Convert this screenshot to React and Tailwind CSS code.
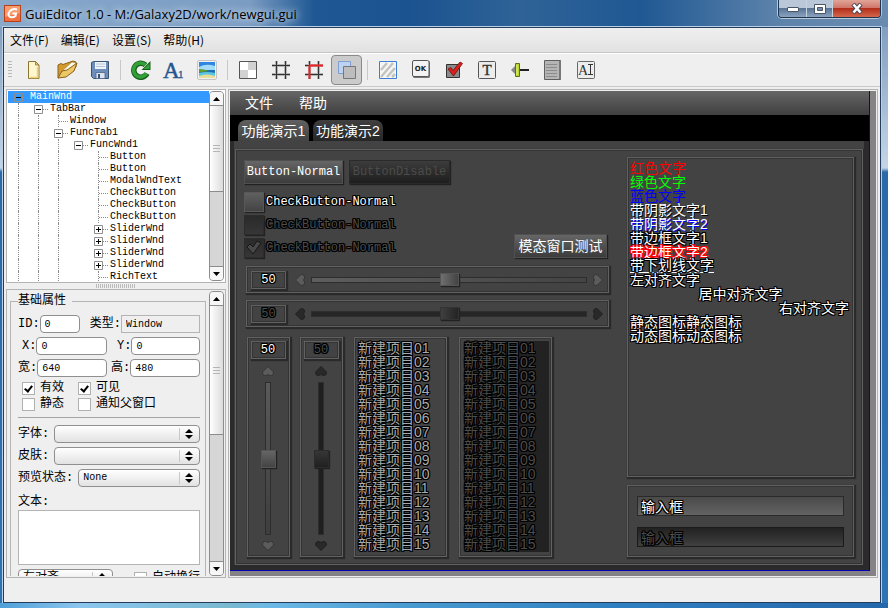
import { useState } from 'react'

const TREE = [
  { name: 'MainWnd', depth: 0, sign: '-' },
  { name: 'TabBar', depth: 1, sign: '-' },
  { name: 'Window', depth: 2 },
  { name: 'FuncTab1', depth: 2, sign: '-' },
  { name: 'FuncWnd1', depth: 3, sign: '-' },
  { name: 'Button', depth: 4 },
  { name: 'Button', depth: 4 },
  { name: 'ModalWndText', depth: 4 },
  { name: 'CheckButton', depth: 4 },
  { name: 'CheckButton', depth: 4 },
  { name: 'CheckButton', depth: 4 },
  { name: 'SliderWnd', depth: 4, sign: '+' },
  { name: 'SliderWnd', depth: 4, sign: '+' },
  { name: 'SliderWnd', depth: 4, sign: '+' },
  { name: 'SliderWnd', depth: 4, sign: '+' },
  { name: 'RichText', depth: 4 },
]

const ITEMS = ['01', '02', '03', '04', '05', '06', '07', '08', '09', '10', '11', '12', '13', '14', '15']

const OUTLINE = '[text-shadow:1px_0_#000,-1px_0_#000,0_1px_#000,0_-1px_#000,1px_1px_#000,-1px_-1px_#000,1px_-1px_#000,-1px_1px_#000]'
const OUTLINE_RED = '[text-shadow:1px_0_#f00,-1px_0_#f00,0_1px_#f00,0_-1px_#f00,1px_1px_#f00,-1px_-1px_#f00,1px_-1px_#f00,-1px_1px_#f00]'
const FRAME = 'border border-[#616161] shadow-[inset_0_0_0_1px_#343434,1px_1px_1px_1px_#2a2a2a]'
const MONO = "font-['Liberation_Mono','Noto_Sans_CJK_SC',monospace]"

/* ---------- toolbar icons ---------- */

const icons = {
  new: (
    <svg width="20" height="20" viewBox="0 0 20 20">
      <path d="M4.500 1.500h7l3.500 3.500v13.500H4.500z" fill="#fdf6cf" stroke="#8d7433" />
      <path d="M11.500 1.500l3.500 3.500h-3.500z" fill="#e9c765" stroke="#8d7433" strokeWidth=".8" />
      <path d="M13.500 7v10.500H6" fill="none" stroke="#ecd27a" strokeWidth="1.500" />
    </svg>
  ),
  open: (
    <svg width="22" height="20" viewBox="0 0 22 20">
      <path d="M2 18V5l3-1.500 2 1L17 1l3 1v5z" fill="#d49b2c" stroke="#8a611a" />
      <path d="M5 12L16 2l4 1-3 8z" fill="#fffbe9" stroke="#a58b4c" strokeWidth=".7" />
      <path d="M2 18l4-7 5-1 10-7-3 8-8 6z" fill="#ecc766" stroke="#8a611a" />
    </svg>
  ),
  save: (
    <svg width="20" height="20" viewBox="0 0 20 20">
      <path d="M1.500 2.500l2-1h15v17H3.500l-2-2z" fill="#6c8eb8" stroke="#3c5470" />
      <path d="M5 2h11v7H5z" fill="#eef3f9" />
      <path d="M6 4h9M6 6.500h9" stroke="#b5c5d8" />
      <path d="M6 12.500h9v6H6z" fill="#dbe4ee" stroke="#49658a" strokeWidth=".8" />
      <path d="M8 14h2v4H8z" fill="#3c5470" />
    </svg>
  ),
  refresh: (
    <svg width="20" height="20" viewBox="0 0 20 20">
      <path d="M16 13.500A7 7 0 1 1 14.500 5" fill="none" stroke="#14611a" strokeWidth="5.500" />
      <path d="M19.500 1v9h-9z" fill="#14611a" />
      <path d="M15.500 13.500A7 7 0 1 1 14.500 5" fill="none" stroke="#35a03a" strokeWidth="3.500" />
      <path d="M18.500 3.500v5.500h-6z" fill="#35a03a" />
    </svg>
  ),
  font: (
    <svg width="22" height="20" viewBox="0 0 22 20" className="overflow-visible">
      <text x="0" y="18" fontSize="23" fontFamily="Liberation Serif, serif" fill="#23568f" stroke="#23568f" strokeWidth=".5">A</text>
      <text x="15" y="18" fontSize="11" fontFamily="Liberation Serif, serif" fill="#23568f" stroke="#23568f" strokeWidth=".3">1</text>
    </svg>
  ),
  image: (
    <svg width="20" height="20" viewBox="0 0 20 20">
      <rect x=".5" y=".5" width="19" height="19" rx="1.500" fill="#f1f1f1" stroke="#c4c4c4" />
      <path d="M2 2h16v9H2z" fill="#2f86e0" />
      <path d="M2 7q7-4 16-1v5H2z" fill="#a5dbfa" />
      <path d="M2 10h16v3H2z" fill="#1d6fb8" />
      <path d="M2 9q5 0 10 2l-10 1.500z" fill="#5f9b2d" />
      <path d="M2 13q8-2 16 0v5H2z" fill="#5fc6e0" />
      <path d="M2 16q8-3 16 0v2H2z" fill="#e8dd9a" />
    </svg>
  ),
  checker: (
    <svg width="18" height="18" viewBox="0 0 18 18">
      <path d="M.5.5h17v17H.5z" fill="#fff" stroke="#555" />
      <path d="M9 1h8v8H9zM1 9h8v8H1z" fill="#d2d2d2" />
    </svg>
  ),
  grid: (
    <svg width="20" height="20" viewBox="0 0 20 20">
      <path d="M5.500 1v18M14.500 1v18M1 5.500h18M1 14.500h18" stroke="#b5b5b5" strokeWidth="3" />
      <path d="M5.500 1v18M14.500 1v18M1 5.500h18M1 14.500h18" stroke="#333" />
    </svg>
  ),
  gridRed: (
    <svg width="20" height="20" viewBox="0 0 20 20">
      <path d="M5.500 1v18M14.500 1v18M1 5.500h18M1 14.500h18" stroke="#b5b5b5" strokeWidth="3" />
      <path d="M14.500 1v18M1 14.500h18" stroke="#333" />
      <path d="M5.500 1v4M1 5.500h4" stroke="#333" />
      <path d="M5.500 5v14M5 5.500h14" stroke="#f02020" strokeWidth="2" />
    </svg>
  ),
  layers: (
    <svg width="20" height="20" viewBox="0 0 20 20">
      <path d="M1.500 1.500h12v12h-12z" fill="#bcd2f0" stroke="#7f9fd0" />
      <path d="M6.500 6.500h12v12h-12z" fill="#bdbdbd" stroke="#777" />
    </svg>
  ),
  stripes: (
    <svg width="18" height="18" viewBox="0 0 18 18">
      <path d="M.5.5h17v17H.5z" fill="#f6f6f6" stroke="#3e7fd6" />
      <path d="M2 9l6-7M2 16L14 2M8 16l8-9M13 16l3-3" stroke="#c3c3bf" strokeWidth="2.500" />
    </svg>
  ),
  ok: (
    <svg width="20" height="20" viewBox="0 0 20 20">
      <rect x="2" y="1" width="17" height="17" rx="1.500" fill="#777" />
      <rect x="1.500" y=".5" width="16.500" height="16" rx="1.500" fill="#f3f3f3" stroke="#555" />
      <text x="9.500" y="11" fontSize="7" fontWeight="bold" fontFamily="DejaVu Sans, sans-serif" textAnchor="middle" fill="#222">OK</text>
    </svg>
  ),
  check: (
    <svg width="20" height="20" viewBox="0 0 20 20">
      <path d="M2.500 4.500h13v13h-13z" fill="#8b8b8b" stroke="#333" />
      <path d="M4 9l3-1.500 2 3L16 2l2.500 1.500L9.500 16z" fill="#dc2020" stroke="#6d0d0d" strokeWidth=".8" />
    </svg>
  ),
  text: (
    <svg width="20" height="20" viewBox="0 0 20 20">
      <rect x="1.500" y="1.500" width="17" height="17" rx="1" fill="#ececec" stroke="#555" />
      <text x="10" y="15" fontSize="15" fontFamily="Liberation Serif, serif" textAnchor="middle" fill="#333" stroke="#333" strokeWidth=".4">T</text>
    </svg>
  ),
  slider: (
    <svg width="20" height="20" viewBox="0 0 20 20">
      <path d="M2 10h17" stroke="#222" strokeWidth="2" />
      <path d="M5 6v8l-4-4z" fill="#888" />
      <path d="M5.500 3.500h4v13h-4z" fill="#b6d62c" stroke="#55701a" />
      <path d="M7 5v10" stroke="#e4f38a" />
    </svg>
  ),
  list: (
    <svg width="20" height="20" viewBox="0 0 20 20">
      <path d="M1.500.5h16v19h-16z" fill="#b5b5b5" stroke="#5f5f5f" />
      <path d="M3 4.500h11M3 7.500h11M3 10.500h11M3 13.500h11M3 16.500h11" stroke="#8b8b8b" />
      <path d="M17 1v18" stroke="#777" strokeWidth="2" />
    </svg>
  ),
  edit: (
    <svg width="20" height="20" viewBox="0 0 20 20">
      <rect x="1.500" y="1.500" width="17" height="17" rx="1" fill="#ececec" stroke="#666" />
      <text x="2" y="15" fontSize="14" fontFamily="Liberation Serif, serif" fill="#333">A</text>
      <path d="M12 4.500h5M14.500 4.500v10M12 14.500h5" stroke="#333" />
    </svg>
  ),
}

function ToolButton({ icon, label, active }) {
  return (
    <button
      aria-label={label}
      className={`flex h-[30px] w-[31px] mx-px items-center justify-center rounded ${
        active ? 'border border-[#8a8a8a] bg-[#cbcbcb]' : ''
      }`}
    >
      {icons[icon]}
    </button>
  )
}

function Separator() {
  return <div className="flex w-2 justify-center"><span className="h-5 w-px bg-[#c8c8c8]" /></div>
}

/* ---------- left side controls ---------- */

function ScrollBar({ thumb }) {
  const cap = 'flex h-[14px] shrink-0 items-center justify-center bg-[#f6f6f6]'
  return (
    <div className="flex w-[15px] shrink-0 flex-col rounded border border-[#8c8c8c] bg-[#d6d6d6] overflow-hidden">
      <button aria-label="Scroll up" className={`${cap} border-b border-[#8c8c8c]`}>
        <svg width="7" height="4" viewBox="0 0 7 4"><path d="M3.500 0L7 4H0z" /></svg>
      </button>
      <div
        className="flex flex-col items-center justify-center gap-[2px] border-b border-[#8c8c8c] bg-gradient-to-r from-white to-[#dcdcdc]"
        style={{ height: thumb }}
      >
        <span className="h-px w-[7px] bg-[#b5b5b5]" />
        <span className="h-px w-[7px] bg-[#b5b5b5]" />
        <span className="h-px w-[7px] bg-[#b5b5b5]" />
      </div>
      <div className="flex-1" />
      <button aria-label="Scroll down" className={`${cap} border-t border-[#8c8c8c]`}>
        <svg width="7" height="4" viewBox="0 0 7 4"><path d="M3.500 4L0 0h7z" /></svg>
      </button>
    </div>
  )
}

function TreeRow({ item, selected, onSelect }) {
  const guides = Array.from({ length: item.depth })
  return (
    <li className={`flex h-3 cursor-default ${selected ? 'bg-[#3399ff] text-white' : ''}`} onClick={onSelect}>
      {guides.map((_, i) => (
        <span key={i} className="flex w-5 justify-center">
          {/* FuncWnd1 is the last node of its level, so its line stops */}
          {i !== 3 && <span className="border-l border-dotted border-[#8a8a8a]" />}
        </span>
      ))}
      <span className="flex w-5 items-center pl-[6px]">
        {item.sign ? (
          <svg width="9" height="9" viewBox="0 0 9 9" className="shrink-0">
            <path d="M.5.5h8v8h-8z" fill={selected ? '#3399ff' : '#fff'} stroke="#8f8f8f" />
            <path d={item.sign === '+' ? 'M2 4.500h5M4.500 2v5' : 'M2 4.500h5'} stroke="#000" />
          </svg>
        ) : (
          <span className="ml-[4px] h-3 border-l border-dotted border-[#8a8a8a]" />
        )}
        <span className="flex-1 border-t border-dotted border-[#8a8a8a]" />
      </span>
      <span className="pl-[2px] text-[10px] leading-[12px]">{item.name}</span>
    </li>
  )
}

function Field({ id, label, value, className }) {
  return (
    <div className={`flex min-w-0 items-center ${className}`}>
      <label htmlFor={id} className="shrink-0 whitespace-nowrap">{label}</label>
      <input
        id={id}
        defaultValue={value}
        className="h-[18px] w-0 min-w-0 flex-1 rounded border border-[#8f8f8f] bg-white px-1 text-[10px] leading-4"
      />
    </div>
  )
}

function Tick({ label, checked }) {
  return (
    <label className="flex items-center gap-[5px] whitespace-nowrap">
      <input
        type="checkbox"
        defaultChecked={checked}
        className="grid size-[13px] appearance-none place-items-center border border-[#b0b0b0] bg-white before:hidden before:h-[8px] before:w-[5px] before:rotate-[38deg] before:border-b-2 before:border-r-2 before:border-black checked:before:block"
      />
      {label}
    </label>
  )
}

function Select({ id, label, options, className, textSize = 'text-[10px]' }) {
  return (
    <div className={`flex items-center ${className}`}>
      {label && <label htmlFor={id} className="shrink-0 whitespace-nowrap pr-[5px]">{label}</label>}
      <div className="relative min-w-0 flex-1">
        <select
          id={id}
          aria-label={label || options[0]}
          className={`block h-[18px] w-full appearance-none rounded border border-[#8f8f8f] bg-gradient-to-b from-white to-[#e2e2e2] pl-1 leading-4 ${textSize}`}
        >
          {options.map((o) => <option key={o}>{o}</option>)}
        </select>
        <svg className="pointer-events-none absolute right-[7px] top-1" width="8" height="10" viewBox="0 0 8 10">
          <path d="M4 0l4 4H0zM4 10L0 6h8z" />
        </svg>
        <span className="pointer-events-none absolute right-[20px] top-[3px] h-3 w-px bg-[#c9c9c9]" />
      </div>
    </div>
  )
}

/* ---------- skinned preview controls ---------- */

function SkinButton({ children, disabled, className }) {
  return (
    <button
      disabled={disabled}
      className={`h-6 whitespace-nowrap border shadow-[1px_1px_1px_#222] bg-gradient-to-b ${
        disabled
          ? 'border-[#2a2a2a] from-[#3c3c3c] to-[#1e1e1e] text-[#4c4c4c]'
          : 'border-[#505050] from-[#666] to-[#3c3c3c] text-white'
      } ${className}`}
    >
      {children}
    </button>
  )
}

function SkinCheck({ disabled, checked }) {
  return (
    <label className={`flex items-center gap-[2px] text-xs leading-5 ${MONO} ${disabled ? 'text-[#4c4c4c]' : 'text-white'}`}>
      <span className="grid size-5">
        <input
          type="checkbox"
          disabled={disabled}
          defaultChecked={checked}
          className={`col-start-1 row-start-1 size-5 appearance-none border bg-gradient-to-b shadow-[1px_1px_1px_#222] ${
            disabled ? 'border-[#2c2c2c] from-[#2a2a2a] to-[#363636]' : 'border-[#585858] from-[#606060] to-[#444]'
          }`}
        />
        {checked && (
          <svg className="col-start-1 row-start-1 m-[2px]" width="16" height="15" viewBox="0 0 16 15">
            <path d="M1 7l3-3 3 3 4-6 4 2-8 11z" fill="#484848" stroke="#161616" />
          </svg>
        )}
      </span>
      CheckButton-Normal
    </label>
  )
}

function Arrow({ rotate, disabled }) {
  return (
    <svg width="12" height="12" viewBox="0 0 12 12" className={`shrink-0 ${rotate}`}>
      <path d="M6 11.500L.5 6q0-4 3.500-3.500l2 1 2-1q3.500-.5 3.500 3.500z" fill={disabled ? '#292929' : '#5c5c5c'} stroke={disabled ? '#1d1d1d' : '#303030'} strokeWidth=".8" />
    </svg>
  )
}

function ValueBox({ disabled }) {
  return (
    <output className={`flex h-[18px] w-[35px] shrink-0 items-center justify-center text-xs ${MONO} ${FRAME} ${OUTLINE} ${disabled ? 'text-[#4c4c4c]' : 'text-white'}`}>
      50
    </output>
  )
}

function HSlider({ disabled }) {
  return (
    <div className={`flex h-[27px] items-center pl-1 pr-[5px] ml-[2px] ${FRAME}`}>
      <ValueBox disabled={disabled} />
      <span className="ml-[9px] flex"><Arrow rotate="rotate-90" disabled={disabled} /></span>
      <input
        type="range"
        aria-label="SliderWnd"
        disabled={disabled}
        defaultValue="50"
        className={`mx-1 h-[6px] min-w-0 flex-1 appearance-none border border-[#2d2d2d] [&::-webkit-slider-thumb]:h-[13px] [&::-webkit-slider-thumb]:w-[19px] [&::-webkit-slider-thumb]:appearance-none [&::-webkit-slider-thumb]:border [&::-webkit-slider-thumb]:bg-gradient-to-r [&::-webkit-slider-thumb]:shadow-[1px_1px_1px_#222] ${
          disabled
            ? 'bg-[#262626] [&::-webkit-slider-thumb]:border-[#333] [&::-webkit-slider-thumb]:from-[#404040] [&::-webkit-slider-thumb]:to-[#242424]'
            : 'bg-gradient-to-r from-[#5e5e5e] to-[#444] [&::-webkit-slider-thumb]:border-[#555] [&::-webkit-slider-thumb]:from-[#707070] [&::-webkit-slider-thumb]:to-[#444]'
        }`}
      />
      <Arrow rotate="-rotate-90" disabled={disabled} />
    </div>
  )
}

function VSlider({ disabled, className }) {
  return (
    <div className={`flex w-[43px] flex-col items-center pb-[5px] pr-px pt-[3px] ${FRAME} ${className}`}>
      <ValueBox disabled={disabled} />
      <span className="mb-1 mt-[7px] flex"><Arrow rotate="rotate-180" disabled={disabled} /></span>
      <input
        type="range"
        aria-label="SliderWnd"
        disabled={disabled}
        defaultValue="50"
        className={`mb-1 w-[6px] min-h-0 flex-1 appearance-none border border-[#2d2d2d] [writing-mode:vertical-lr] [&::-webkit-slider-thumb]:h-[18px] [&::-webkit-slider-thumb]:w-[15px] [&::-webkit-slider-thumb]:appearance-none [&::-webkit-slider-thumb]:border [&::-webkit-slider-thumb]:bg-gradient-to-b [&::-webkit-slider-thumb]:shadow-[1px_1px_1px_#222] ${
          disabled
            ? 'bg-[#1f1f1f] [&::-webkit-slider-thumb]:border-[#2b2b2b] [&::-webkit-slider-thumb]:from-[#363636] [&::-webkit-slider-thumb]:to-[#202020]'
            : 'bg-gradient-to-b from-[#5a5a5a] to-[#3e3e3e] [&::-webkit-slider-thumb]:border-[#555] [&::-webkit-slider-thumb]:from-[#666] [&::-webkit-slider-thumb]:to-[#444]'
        }`}
      />
      <Arrow rotate="rotate-0" disabled={disabled} />
    </div>
  )
}

function ListBox({ disabled, className }) {
  return (
    <div className={`w-[93px] p-[3px] ${FRAME} ${className}`}>
      <ul className={`h-[211px] w-[85px] whitespace-nowrap text-sm leading-[14px] ${OUTLINE} ${disabled ? 'bg-[#222] text-[#4c4c4c] ml-px' : 'text-[#aaa]'}`}>
        {ITEMS.map((n) => <li key={n}>新建项目{n}</li>)}
      </ul>
    </div>
  )
}

function TitleBar() {
  return (
    <header className="flex h-[27px] shrink-0 items-start bg-[linear-gradient(to_right,#8ba9c9_0,#87a8cb_30px,#7b9cc2_250px,#1e5793_315px,#1b5390_410px,#2f6397_520px,#1f5893_640px,#5d83ab_780px,#6a8bb0_100%)]">
      <svg className="ml-1 mt-[5px] shrink-0" width="17" height="17" viewBox="0 0 17 17">
        <rect x=".5" y=".5" width="16" height="16" fill="#f0703f" stroke="#b7401c" />
        <path d="M1 1h15v7L1 12z" fill="#f79c6d" />
        <path d="M13 4.500q-4-1.500-7 1.500-3 4 0 6 3 1 5.500-1l.5-2.500H8.500" fill="none" stroke="#fff" strokeWidth="2" />
      </svg>
      <h1 className="ml-1 flex-1 self-center whitespace-nowrap font-['Open_Sans',sans-serif] text-[13px] leading-5 text-black [text-shadow:0_0_6px_#c9daec,0_0_8px_#c9daec]">
        GuiEditor 1.0 - M:/Galaxy2D/work/newgui.gui
      </h1>
      <div className="mr-[7px] flex h-[18px] overflow-hidden rounded-b border border-t-0 border-[#1f3550] shadow-[0_0_0_1px_#b7c8db]">
        <button aria-label="Minimize" className="flex w-[28px] items-end justify-center border-r border-[#c5d2e0] bg-[linear-gradient(#b9c7d8_0_45%,#5a7597_50%,#8ba3bf)] pb-[5px]">
          <span className="h-[5px] w-3 rounded-[1px] border border-[#4b5563] bg-white" />
        </button>
        <button aria-label="Maximize" className="flex w-[26px] items-center justify-center border-r border-[#c5d2e0] bg-[linear-gradient(#b9c7d8_0_45%,#5a7597_50%,#8ba3bf)]">
          <svg width="12" height="10" viewBox="0 0 12 10">
            <path d="M.5.5h11v9H.5z" fill="#fff" stroke="#4b5563" />
            <path d="M3.500 3.500h5v3h-5z" fill="#7790ae" stroke="#4b5563" />
          </svg>
        </button>
        <button aria-label="Close" className="flex w-[47px] items-center justify-center bg-[linear-gradient(#e0a598_0,#d0776a_45%,#b32e1b_50%,#d4674c)]">
          <svg width="12" height="11" viewBox="0 0 12 11">
            <path d="M2 1l8 9M10 1L2 10" stroke="#4f4a55" strokeWidth="4.500" />
            <path d="M2.500 1.500l7 8M9.500 1.500l-7 8" stroke="#fff" strokeWidth="2.500" />
          </svg>
        </button>
      </div>
    </header>
  )
}

function Properties() {
  return (
    <div className="flex min-h-0 flex-1 border border-[#b4b4b4] p-px">
      <div className="min-w-0 flex-1 overflow-hidden pl-[2px] pr-[3px] pt-[2px]">
        <fieldset className="min-w-0 border border-b-0 border-[#b4b4b4] pb-3 pl-[7px] pr-[5px]">
          <legend className="pr-[6px] leading-4">基础属性</legend>
          <div className="flex justify-between pt-[6px]">
            <Field id="wid" label="ID:" value="0" className="w-[62px]" />
            <div className="flex items-center">
              <label htmlFor="wtype">类型:</label>
              <input id="wtype" readOnly defaultValue="Window" className="h-[18px] w-[79px] border border-[#b4b4b4] px-1 text-[10px]" />
            </div>
          </div>
          <div className="mt-1 grid grid-cols-2 gap-1">
            <Field id="wx" label="X:" value="0" className="pl-1" />
            <Field id="wy" label="Y:" value="0" className="pl-[6px]" />
          </div>
          <div className="mt-1 grid grid-cols-2 gap-1">
            <Field id="ww" label="宽:" value="640" />
            <Field id="wh" label="高:" value="480" />
          </div>
          <div className="ml-1 mt-[3px] grid grid-cols-[56px_auto] leading-4">
            <Tick label="有效" checked />
            <Tick label="可见" checked />
            <Tick label="静态" />
            <Tick label="通知父窗口" />
          </div>
          <hr className="mb-[7px] mt-[5px] border-[#a5a5a5]" />
          <Select id="font" label="字体:" options={['']} />
          <Select id="skin" label="皮肤:" options={['']} className="mt-1" />
          <Select id="state" label="预览状态:" options={['None']} className="mt-1" />
          <label htmlFor="content" className="mt-[7px] block leading-4">文本:</label>
          <textarea id="content" className="block h-[55px] w-full resize-none border border-[#b4b4b4] bg-white" />
          <div className="mt-1 flex items-center justify-between">
            <Select id="align" options={['左对齐']} className="w-[95px]" textSize="text-xs" />
            <Tick label="自动换行" />
          </div>
        </fieldset>
      </div>
      <ScrollBar thumb={129} />
    </div>
  )
}

function Preview() {
  return (
    <div className="flex min-w-0 flex-1 flex-col border-b border-r border-[#0000b0] bg-[#2b2b2b] font-['Liberation_Sans','Noto_Sans_CJK_SC',sans-serif] text-white">
      <nav className={`flex h-6 shrink-0 items-center gap-[26px] bg-gradient-to-b from-[#666] to-[#404040] pl-[15px] text-sm leading-[14px] ${OUTLINE}`}>
        <button>文件</button>
        <button>帮助</button>
      </nav>
      <div role="tablist" className={`flex h-[26px] shrink-0 items-end gap-1 bg-black pl-2 text-sm leading-[14px] ${OUTLINE}`}>
        <button role="tab" aria-selected="true" className="h-[21px] w-[71px] whitespace-nowrap rounded-t-lg bg-gradient-to-b from-[#606060] to-[#434343]">功能演示1</button>
        <button role="tab" className="h-[21px] w-[70px] whitespace-nowrap rounded-t-lg bg-gradient-to-b from-[#404040] to-[#262626]">功能演示2</button>
      </div>
      <div className="flex min-h-0 flex-1 border-b-[5px] border-l-4 border-r-[5px] border-[#2b2b2b] bg-[#434343] pl-px pr-px pt-2">
        <div className={`flex min-w-0 flex-1 gap-[18px] px-2 py-[7px] ${FRAME}`}>
          <div className="flex min-w-0 flex-1 flex-col pt-[3px]">
            <div className={`flex gap-[6px] text-xs ${MONO} ${OUTLINE}`}>
              <SkinButton className="w-[99px]">Button-Normal</SkinButton>
              <SkinButton disabled className="w-[101px]">ButtonDisable</SkinButton>
            </div>
            <div className={`mt-2 flex items-end justify-between ${OUTLINE}`}>
              <div className="flex flex-col gap-[3px]">
                <SkinCheck />
                <SkinCheck disabled />
                <SkinCheck disabled checked />
              </div>
              <SkinButton className="mr-[2px] w-[93px] text-sm">模态窗口测试</SkinButton>
            </div>
            <div className="mt-2 flex flex-col gap-[7px]">
              <HSlider />
              <HSlider disabled />
            </div>
            <div className="mt-[10px] ml-[3px] flex min-h-0 flex-1">
              <VSlider />
              <VSlider disabled className="ml-[10px]" />
              <ListBox className="ml-[11px]" />
              <ListBox disabled className="ml-[12px]" />
            </div>
          </div>
          <div className="flex w-[227px] shrink-0 flex-col gap-2">
            <div className={`flex-1 px-[2px] pt-[3px] text-sm leading-[14px] ${FRAME}`}>
              <p className="text-[#f00]">红色文字</p>
              <p className="text-[#0f0]">绿色文字</p>
              <p className="text-[#00f]">蓝色文字</p>
              <p className="[text-shadow:1px_1px_#000]">带阴影文字1</p>
              <p className="[text-shadow:1px_1px_#00f]">带阴影文字2</p>
              <p className={OUTLINE}>带边框文字1</p>
              <p className={OUTLINE_RED}>带边框文字2</p>
              <p className={`w-fit border-b border-white leading-[13px] ${OUTLINE}`}>带下划线文字</p>
              <p className={OUTLINE}>左对齐文字</p>
              <p className={`text-center ${OUTLINE}`}>居中对齐文字</p>
              <p className={`pr-[2px] text-right ${OUTLINE}`}>右对齐文字</p>
              <p className={OUTLINE}>静态图标静态图标</p>
              <p className={OUTLINE}>动态图标动态图标</p>
            </div>
            <div className={`flex h-[72px] flex-col gap-[11px] px-[9px] pt-[10px] text-sm leading-[14px] ${FRAME} ${OUTLINE}`}>
              <input
                aria-label="输入框"
                defaultValue="输入框"
                className="h-5 border border-[#2a2a2a] bg-gradient-to-b from-[#4a4a4a] to-[#636363] px-[3px] [text-shadow:inherit]"
              />
              <input
                aria-label="输入框"
                disabled
                defaultValue="输入框"
                className="h-5 border border-[#1b1b1b] bg-gradient-to-b from-[#222] to-[#404040] px-[3px] text-[#4c4c4c] [text-shadow:inherit]"
              />
            </div>
          </div>
        </div>
      </div>
    </div>
  )
}

export default function App() {
  const [selected, setSelected] = useState(0)

  return (
    <div className="flex h-screen flex-col overflow-hidden bg-[linear-gradient(#7594b8_0,#c5d5e6_168px,#2b69a8_172px,#2d74b5_100%)] font-['Noto_Sans_CJK_SC',sans-serif] text-xs text-black">
      <TitleBar />
      <div className="ml-[3px] mr-[7px] flex min-h-0 flex-1 flex-col border border-[#243d5c] bg-[#efefef] shadow-[0_0_0_1px_#b9d0e6]">
        <nav className="flex h-[25px] shrink-0 items-center gap-3 border-b border-[#c6c6c6] bg-gradient-to-b from-[#efefef] to-[#e2e2e2] pl-[6px]">
          <button>文件(F)</button>
          <button>编辑(E)</button>
          <button>设置(S)</button>
          <button>帮助(H)</button>
        </nav>

        <div className="flex h-[34px] shrink-0 items-center border-b border-t border-b-[#c9c9c9] border-t-white pl-1">
          <span className="mr-[5px] h-[18px] w-1 bg-[repeating-linear-gradient(#b8b8b8_0_1px,transparent_1px_3px)]" />
          <ToolButton icon="new" label="New" />
          <ToolButton icon="open" label="Open" />
          <ToolButton icon="save" label="Save" />
          <Separator />
          <ToolButton icon="refresh" label="Refresh" />
          <ToolButton icon="font" label="Font" />
          <ToolButton icon="image" label="Image" />
          <Separator />
          <ToolButton icon="checker" label="Background" />
          <ToolButton icon="grid" label="Grid" />
          <ToolButton icon="gridRed" label="Snap to grid" />
          <ToolButton icon="layers" label="Layers" active />
          <Separator />
          <ToolButton icon="stripes" label="Window" />
          <ToolButton icon="ok" label="Button" />
          <ToolButton icon="check" label="Check button" />
          <ToolButton icon="text" label="Static text" />
          <ToolButton icon="slider" label="Slider" />
          <ToolButton icon="list" label="List box" />
          <ToolButton icon="edit" label="Edit box" />
        </div>

        <main className="flex min-h-0 flex-1 gap-[2px] pl-[2px] pr-[2px] pt-[2px]">
          <aside className={`flex w-[220px] shrink-0 flex-col ${MONO}`}>
            <div className="flex h-[194px] shrink-0 overflow-hidden border border-[#b4b4b4] bg-white p-px">
              <ul className="min-w-0 flex-1 overflow-hidden">
                {TREE.map((item, i) => (
                  <TreeRow key={i} item={item} selected={i === selected} onSelect={() => setSelected(i)} />
                ))}
              </ul>
              <ScrollBar thumb={86} />
            </div>
            <div className="flex h-[6px] shrink-0 items-center justify-center">
              <span className="h-1 w-10 bg-[repeating-linear-gradient(to_right,#bbb_0_1px,transparent_1px_2px)]" />
            </div>
            <Properties />
          </aside>
          <section className="flex min-w-0 flex-1 border border-[#b4b4b4] p-px">
            <div className="flex min-w-0 flex-1 bg-[#848284] pb-[5px] pr-[6px]">
              <Preview />
            </div>
          </section>
        </main>
        <footer className="h-[24px] shrink-0" />
      </div>
      <div className="h-[5px] shrink-0 bg-[linear-gradient(to_right,#4f9fd8,#8cc6ee_80px,#79b9d0_230px,#6cb9e6_270px,#4a9bd2_400px,#2f7fc0_620px,#2467ab)]" />
    </div>
  )
}
